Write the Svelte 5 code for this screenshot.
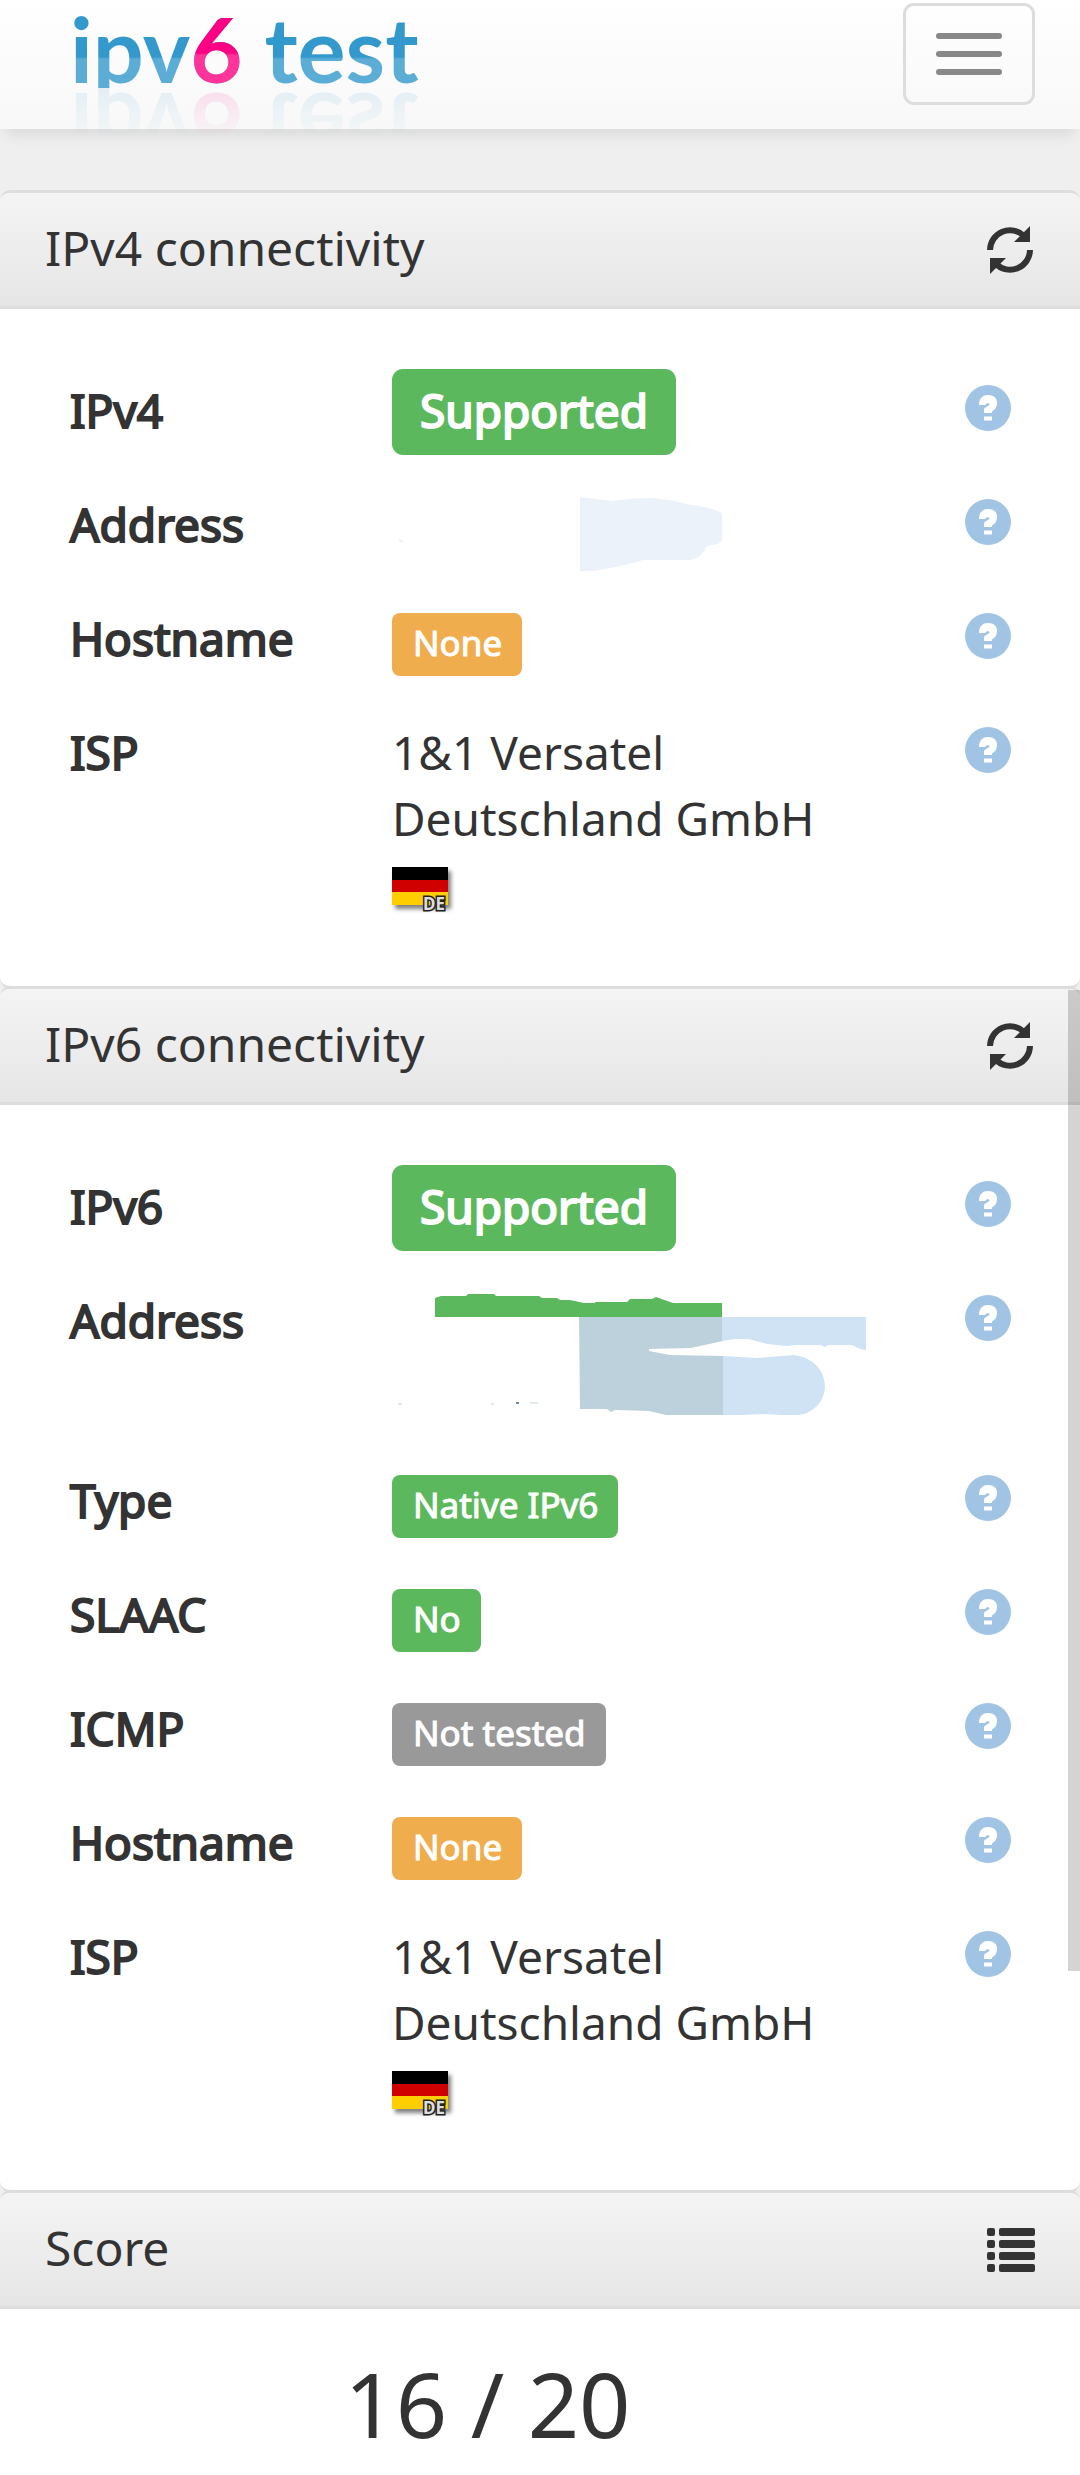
<script lang="ts">
  type Tone = 'success' | 'warning' | 'muted'

  interface Row {
    label: string
    kind: 'badge' | 'hidden4' | 'hidden6' | 'isp'
    text?: string
    tone?: Tone
    large?: boolean
  }

  interface Panel {
    title: string
    rows: Row[]
  }

  const panels: Panel[] = [
    {
      title: 'IPv4 connectivity',
      rows: [
        { label: 'IPv4', kind: 'badge', text: 'Supported', tone: 'success', large: true },
        { label: 'Address', kind: 'hidden4' },
        { label: 'Hostname', kind: 'badge', text: 'None', tone: 'warning' },
        { label: 'ISP', kind: 'isp', text: '1&1 Versatel Deutschland GmbH' },
      ],
    },
    {
      title: 'IPv6 connectivity',
      rows: [
        { label: 'IPv6', kind: 'badge', text: 'Supported', tone: 'success', large: true },
        { label: 'Address', kind: 'hidden6' },
        { label: 'Type', kind: 'badge', text: 'Native IPv6', tone: 'success' },
        { label: 'SLAAC', kind: 'badge', text: 'No', tone: 'success' },
        { label: 'ICMP', kind: 'badge', text: 'Not tested', tone: 'muted' },
        { label: 'Hostname', kind: 'badge', text: 'None', tone: 'warning' },
        { label: 'ISP', kind: 'isp', text: '1&1 Versatel Deutschland GmbH' },
      ],
    },
  ]

  const score = 16
  const maxScore = 20

  let menuOpen = $state(false)
</script>

<div class="page">
  <header class="navbar">
    <a class="logo" href="/" aria-label="ipv6 test">ipv<span class="six">6</span> test</a>
    <button
      class="toggle"
      aria-label="Toggle navigation"
      aria-expanded={menuOpen}
      onclick={() => (menuOpen = !menuOpen)}
    >
      <span class="bar"></span>
      <span class="bar"></span>
      <span class="bar"></span>
    </button>
  </header>

  <main>
    {#each panels as panel}
      <section class="panel">
        <div class="panel-head">
          <h3>{panel.title}</h3>
          <button class="icon-btn" aria-label="Refresh {panel.title}">
            <svg width="48" height="48" viewBox="0 0 48 48" aria-hidden="true">
              <path d="M3 24A20 20 0 0 1 37 10M43 24A20 20 0 0 1 9 38" fill="none" stroke="#333" stroke-width="6" />
              <path d="M43 0V16H27ZM3 48V32H19Z" fill="#333" />
            </svg>
          </button>
        </div>

        <div class="panel-body">
          <table>
            <tbody>
              {#each panel.rows as row}
                <tr>
                  <th scope="row">{row.label}</th>
                  <td class="value">
                    {#if row.kind === 'badge'}
                      <span class="badge {row.tone}" class:large={row.large}>{row.text}</span>
                    {:else if row.kind === 'hidden4'}
                      <svg class="scribble" height="66" aria-hidden="true">
                        <path d="M188 6Q204 8 220 10Q240 7 262 7Q280 9 299 14Q318 16 330 22V49L326 53L315 55Q310 67 299 69H251Q232 75 213 78Q200 81 188 80Z" fill="#ebf2f9" />
                        <path d="M7 49L11 51" stroke="#e9f5f0" stroke-width="2" />
                      </svg>
                    {:else if row.kind === 'hidden6'}
                      <svg class="scribble" height="132" aria-hidden="true">
                        <path d="M43 11L49 9H74L76 7H102L104 9H147L150 11H165L168 13H178L192 16H202L204 15H235L238 12H260L264 10L281 16H330V30H43Z" fill="#5cb85c" />
                        <path d="M187 30H331V54L299 61L257 62V64L278 68L331 69V128H274L257 124L223 123L219 125L215 122H188Z" fill="#bdd1dd" />
                        <path d="M330 30H474V63L468 62L460 58L436 58L433 60L429 58H404L395 59L375 57L357 52H343L330 54Z" fill="#cfe3f4" />
                        <path d="M331 69L364 71L390 69L402 68C423 71 433 85 433 100C432 116 420 127 405 128H390L371 127L350 128H331Z" fill="#cfe3f4" />
                        <path d="M6 117H10M99 117H102M138 116H146" stroke="#c5d3da" stroke-width="1" />
                        <path d="M124 116H127" stroke="#6d8ba0" stroke-width="2" />
                      </svg>
                    {:else}
                      {row.text}
                      <svg class="flag" width="62" height="46" viewBox="0 0 62 46" role="img" aria-label="Germany">
                        <rect class="shade" x="3" y="4" width="56" height="38" fill="#000" opacity="0.5" />
                        <rect width="56" height="38" fill="#ffce00" />
                        <rect width="56" height="25" fill="#d00000" />
                        <rect width="56" height="13" fill="#000" />
                        <text class="code" x="31" y="43">DE</text>
                      </svg>
                    {/if}
                  </td>
                  <td class="help">
                    <button class="icon-btn" aria-label="Help: {row.label}">
                      <svg width="46" height="46" viewBox="0 0 46 46" aria-hidden="true">
                        <circle cx="23" cy="23" r="23" fill="#a1c4e4" />
                        <path d="M14 20C14 13 18 10 23 10C29 10 32 13 32 18C32 22 30 25 27 26.500V28H19V24.500C19 22 24.500 21 24.500 19.500C24.500 18 22.500 18 21.500 18.500L20 20ZM19 31.500H27V35.500H19Z" fill="#fff" />
                      </svg>
                    </button>
                  </td>
                </tr>
              {/each}
            </tbody>
          </table>
        </div>
      </section>
    {/each}

    <section class="panel last">
      <div class="panel-head">
        <h3>Score</h3>
        <button class="icon-btn" aria-label="Score details">
          <svg width="48" height="44" viewBox="0 0 48 44" fill="#333" aria-hidden="true">
            {#each [0, 12, 24, 36] as y}
              <rect x="0" {y} width="8" height="8" rx="2" />
              <rect x="12" {y} width="36" height="8" rx="2" />
            {/each}
          </svg>
        </button>
      </div>
      <p class="score">{score} / {maxScore}</p>
    </section>
  </main>

  <div class="scrollbar"></div>
</div>

<style>
  :global(body) { background: #efefef; }

  .page {
    min-height: 100vh; display: flex; flex-direction: column;
    font-family: 'Noto Sans', sans-serif; font-size: 46px; line-height: 66px; color: #333;
  }

  .navbar {
    display: flex; justify-content: space-between; align-items: flex-start;
    height: 129px; box-sizing: border-box; padding: 0 45px 0 70px;
    background: linear-gradient(#fff, #f8f8f8);
    box-shadow: 0 11px 14px -6px rgba(0, 0, 0, 0.1);
  }
  .logo {
    height: 88px;
    font-family: Lato, sans-serif; font-size: 90px; font-weight: 700; line-height: 96px;
    text-decoration: none; color: transparent;
    background: linear-gradient(#39c 57px, #5cadd6 59px);
    background-clip: text;
    -webkit-box-reflect: below 0 linear-gradient(transparent 45%, rgba(0, 0, 0, 0.15));
  }
  .six {
    background: linear-gradient(#ff0084 59px, #f39 61px);
    background-clip: text;
  }
  .toggle {
    display: flex; flex-direction: column; gap: 12px;
    margin-top: 3px; padding: 27px 30px; border: 3px solid #ddd; border-radius: 11px;
    background: transparent; cursor: pointer;
  }
  .bar { width: 66px; height: 6px; border-radius: 3px; background: #888; }

  main { flex: 1; display: flex; flex-direction: column; padding-top: 61px; }
  .panel {
    border: solid #ddd; border-width: 3px 0; border-radius: 11px;
    background: #fff; overflow: hidden;
  }
  .panel + .panel { margin-top: -3px; }
  .panel.last { flex: 1; border-bottom: 0; border-radius: 11px 11px 0 0; }
  .panel-head {
    display: flex; justify-content: space-between; align-items: center;
    height: 113px; padding: 0 45px;
    background: linear-gradient(#f4f4f4, #e6e6e6);
    border-bottom: 3px solid #ddd;
  }
  h3 { margin: 0; padding-bottom: 3px; font-size: 48px; font-weight: 400; }
  .icon-btn { display: block; padding: 0; border: 0; background: none; cursor: pointer; }
  .icon-btn svg { display: block; }

  .panel-body { padding: 44px 69px 45px; }
  table { width: 100%; border-collapse: collapse; }
  th, td { padding: 24px 0; vertical-align: top; text-align: left; }
  th { width: 322px; padding-left: 1px; font-weight: 400; -webkit-text-stroke: 2px #333; }
  td.value { padding-right: 100px; }
  td.help { width: 46px; }
  .help .icon-btn { margin-top: 8px; }

  .badge {
    padding: 6px 20px 10px 21px; border-radius: 8px;
    font-size: 35px; line-height: 35px; color: #fff; -webkit-text-stroke: 1px #fff;
  }
  .badge.large {
    padding: 10px 28px 14px; border-radius: 11px;
    font-size: 46px; line-height: 46px; -webkit-text-stroke: 2px #fff;
  }
  .success { background: #5cb85c; }
  .warning { background: #f0ad4e; }
  .muted { background: #999; }

  .scribble { display: block; width: 100%; overflow: visible; }
  .flag { display: inline-block; vertical-align: middle; overflow: visible; }
  .shade { filter: blur(2px); }
  .code {
    font-size: 17px; font-weight: 700; fill: #ddd;
    stroke: #222; stroke-width: 3px; paint-order: stroke;
  }

  .score { margin: 0; padding: 29px 105px 0 0; font-size: 90px; line-height: 130px; text-align: center; }

  /* overlay scroll thumb */
  .scrollbar {
    position: fixed; top: 990px; right: 0; bottom: 504px; width: 12px;
    background: rgba(0, 0, 0, 0.17);
  }
</style>
